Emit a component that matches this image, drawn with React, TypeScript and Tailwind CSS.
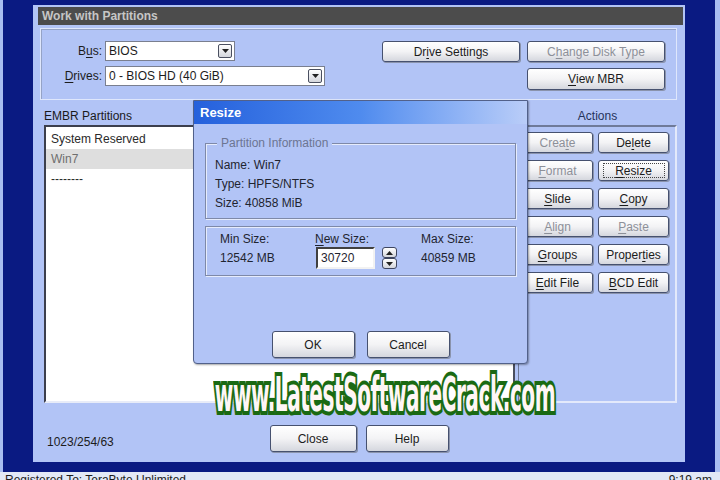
import React from "react";

const ui = "font-['Liberation_Sans',Arial,sans-serif]";

function Acc({ text, u }: { text: string; u?: number }) {
  if (u === undefined) return <>{text}</>;
  return (
    <>
      {text.slice(0, u)}
      <span className="underline underline-offset-[2px]">{text[u]}</span>
      {text.slice(u + 1)}
    </>
  );
}

type BtnProps = {
  label: string;
  u?: number;
  disabled?: boolean;
  focus?: boolean;
  className?: string;
};

function Btn({ label, u, disabled, focus, className = "" }: BtnProps) {
  return (
    <div
      className={`flex items-center justify-center rounded-[3px] border border-[#46516f] bg-linear-to-b from-white via-[#f3f3f5] to-[#d5d7de] shadow-[1px_1px_0_#8a93ac] text-[12px] leading-none ${
        disabled ? "text-[#8d9099]" : "text-[#1c1c1c]"
      } ${className}`}
    >
      {focus ? (
        <span className="flex h-[15px] w-[62px] items-center justify-center border border-dotted border-[#444]">
          <Acc text={label} u={u} />
        </span>
      ) : (
        <Acc text={label} u={u} />
      )}
    </div>
  );
}

function Arrow({ up }: { up?: boolean }) {
  return (
    <svg width="7" height="4" viewBox="0 0 7 4">
      <path d={up ? "M0 4h7L3.5 0z" : "M0 0h7L3.5 4z"} fill="#222" />
    </svg>
  );
}

function Select({ value, w }: { value: string; w: string }) {
  return (
    <div className={`flex h-[20px] items-center justify-between border border-[#7a7f8f] bg-white pl-[3px] pr-[2px] text-[12px] text-[#1c1c1c] ${w}`}>
      <span>{value}</span>
      <span className="flex h-[14px] w-[14px] items-center justify-center rounded-[2px] border border-[#4a4f60] bg-linear-to-b from-white to-[#d4d6dc]">
        <Arrow />
      </span>
    </div>
  );
}

const actions: BtnProps[] = [
  { label: "Create", u: 4, disabled: true },
  { label: "Delete", u: 2 },
  { label: "Format", u: 0, disabled: true },
  { label: "Resize", u: 0, focus: true },
  { label: "Slide", u: 0 },
  { label: "Copy", u: 0 },
  { label: "Align", u: 0, disabled: true },
  { label: "Paste", u: 0, disabled: true },
  { label: "Groups", u: 0 },
  { label: "Properties", u: 6 },
  { label: "Edit File", u: 0 },
  { label: "BCD Edit", u: 0 },
];

export default function App() {
  return (
    <div className={`relative h-[480px] w-[720px] overflow-hidden bg-[#0a1a82] ${ui}`}>
      <div className="flex h-[472px] border-l-[3px] border-r-[5px] border-[#a9bdf1] pl-[30px] pr-[30px] pt-[5px] pb-[10px]">
        <div className="flex h-[457px] w-[652px] flex-col bg-[#b2c4f6]">
          {/* window title */}
          <div className="mt-[2px] ml-[5px] mr-[2px] flex h-[18px] items-center bg-[#4c4c4c] pl-[4px] text-[12px] font-bold text-[#c6c6c6]">
            Work with Partitions
          </div>

          {/* bus / drives */}
          <div className="mt-[3px] ml-[7px] mr-[8px] flex h-[72px] border border-[#dfe7fc] pt-[12px] pl-[7px] pr-[11px] shadow-[inset_1px_1px_0_#95a3c6]">
            <div className="flex flex-col gap-[5px] text-[12px] text-[#1c1c1c]">
              <div className="flex items-center">
                <span className="w-[57px] pr-[3px] text-right">
                  <Acc text="Bus:" u={1} />
                </span>
                <Select value="BIOS" w="w-[130px]" />
              </div>
              <div className="flex items-center">
                <span className="w-[57px] pr-[3px] text-right">
                  <Acc text="Drives:" u={0} />
                </span>
                <Select value="0 - BIOS HD (40 GiB)" w="w-[220px]" />
              </div>
            </div>
            <div className="ml-auto grid grid-cols-[138px_138px] content-start gap-x-[7px] gap-y-[6px]">
              <Btn label="Drive Settings" u={2} className="h-[21px]" />
              <Btn label="Change Disk Type" u={1} disabled className="h-[21px]" />
              <Btn label="View MBR" u={0} className="col-start-2 h-[22px]" />
            </div>
          </div>

          {/* partitions + actions */}
          <div className="ml-[11px] mr-[8px] flex flex-1 gap-[3px]">
            <div className="flex w-[471px] flex-col">
              <div className="h-[25px] pt-[9px] text-[12px] leading-[14px] text-[#1a1a1a]">EMBR Partitions</div>
              <div className="flex-1 border-2 border-t-[#3c3f4d] border-l-[#3c3f4d] border-r-[#4a4e5e] border-b-[#e8ecf8] bg-white pt-[2px] text-[12px]">
                <div className="flex h-[20px] items-center pl-[5px] text-[#2a2a2a]">System Reserved</div>
                <div className="flex h-[20px] items-center bg-[#dedede] pl-[5px] text-[#6e6e6e]">Win7</div>
                <div className="flex h-[20px] items-center pl-[5px] text-[#2a2a2a]">--------</div>
              </div>
            </div>
            <div className="flex w-[159px] flex-col">
              <div className="h-[25px] pt-[9px] text-center text-[12px] leading-[14px] text-[#25335a]">Actions</div>
              <div className="flex-1 border-t-2 border-l border-r-2 border-b-2 border-t-[#6f7a99] border-l-[#6f7a99] border-r-[#e3e9fb] border-b-[#e3e9fb] pt-[5px] pl-[3px]">
                <div className="grid grid-cols-[71px_71px] gap-x-[5px] gap-y-[7px]">
                  {actions.map((a) => (
                    <Btn key={a.label} {...a} className="h-[21px]" />
                  ))}
                </div>
              </div>
            </div>
          </div>

          {/* bottom */}
          <div className="grid h-[59px] grid-cols-[1fr_auto_1fr] pt-[22px] pb-[10px]">
            <div className="mt-[6px] self-center pl-[14px] text-[12px] text-[#1c1c1c]">1023/254/63</div>
            <div className="flex gap-[9px]">
              <Btn label="Close" className="h-[27px] w-[87px]" />
              <Btn label="Help" className="h-[27px] w-[83px]" />
            </div>
            <div />
          </div>
        </div>
      </div>

      {/* status bar */}
      <div className="flex h-[8px] justify-between overflow-hidden bg-[#e2e8f6] px-[5px] pt-[1px] text-[12px] leading-[14px] text-[#1c1c1c]">
        <span>Registered To: TeraByte Unlimited</span>
        <span className="pr-[3px]">9:19 am</span>
      </div>

      {/* Resize dialog */}
      <div className="absolute left-[193px] top-[100px] flex h-[264px] w-[335px] flex-col rounded-b-[4px] border border-[#52618a] bg-[#b2c4f6] shadow-[1px_1px_2px_rgba(0,0,0,0.35)]">
        <div className="flex h-[23px] items-center bg-linear-to-r from-[#2560dc] via-[#4f8bee] to-[#bacdf8] pl-[6px] text-[13px] font-bold text-white">
          Resize
        </div>

        <div className="relative mx-[11px] mt-[19px] h-[76px] border border-[#7e89a8] pt-[12px] pl-[9px] text-[12px] leading-[19px] text-[#1f2430] shadow-[inset_1px_1px_0_#e6ecfc,1px_1px_0_#e6ecfc]">
          <span className="absolute -top-[8px] left-[11px] bg-[#b2c4f6] px-[4px] leading-[14px] text-[#6c7592]">
            Partition Information
          </span>
          <div>Name: Win7</div>
          <div>Type: HPFS/NTFS</div>
          <div>Size: 40858 MiB</div>
        </div>

        <div className="mx-[11px] mt-[7px] flex h-[50px] border border-[#7e89a8] pt-[5px] pl-[14px] text-[12px] text-[#1f2430] shadow-[inset_1px_1px_0_#e6ecfc,1px_1px_0_#e6ecfc]">
          <div className="flex w-[95px] flex-col">
            <span className="leading-[14px]">Min Size:</span>
            <span className="mt-[1px] flex h-[22px] items-center">12542 MB</span>
          </div>
          <div className="flex w-[106px] flex-col">
            <span className="leading-[14px]">
              <Acc text="New Size:" u={0} />
            </span>
            <div className="mt-[1px] flex h-[22px] items-center">
              <div className="ml-[1px] flex h-[22px] w-[59px] items-center border-2 border-t-[#404040] border-l-[#404040] border-r-[#f2f2f2] border-b-[#f2f2f2] bg-white pl-[3px]">
                30720
              </div>
              <div className="ml-[7px] flex flex-col">
                <span className="flex h-[11px] w-[15px] items-center justify-center rounded-[3px] border border-[#3e4660] bg-linear-to-b from-white to-[#d4d6dc]">
                  <Arrow up />
                </span>
                <span className="flex h-[11px] w-[15px] items-center justify-center rounded-[3px] border border-[#3e4660] bg-linear-to-b from-white to-[#d4d6dc]">
                  <Arrow />
                </span>
              </div>
            </div>
          </div>
          <div className="flex flex-col">
            <span className="leading-[14px]">Max Size:</span>
            <span className="mt-[1px] flex h-[22px] items-center">40859 MB</span>
          </div>
        </div>

        <div className="mt-auto mb-[5px] flex justify-center gap-[12px]">
          <Btn label="OK" className="h-[27px] w-[83px]" />
          <Btn label="Cancel" className="h-[27px] w-[83px]" />
        </div>
      </div>

      {/* watermark */}
      <div className="absolute left-[385px] top-[370px] -translate-x-1/2 whitespace-nowrap">
        <span className="inline-block scale-x-[0.465] font-['Liberation_Sans_Narrow','DejaVu_Sans_Condensed','Liberation_Sans',sans-serif] text-[48px] font-bold leading-none tracking-[-1px] text-[#fff6f6] [-webkit-text-stroke:8px_#1a6a13] [paint-order:stroke_fill]">
          www.LatestSoftwareCrack.com
        </span>
      </div>
    </div>
  );
}
